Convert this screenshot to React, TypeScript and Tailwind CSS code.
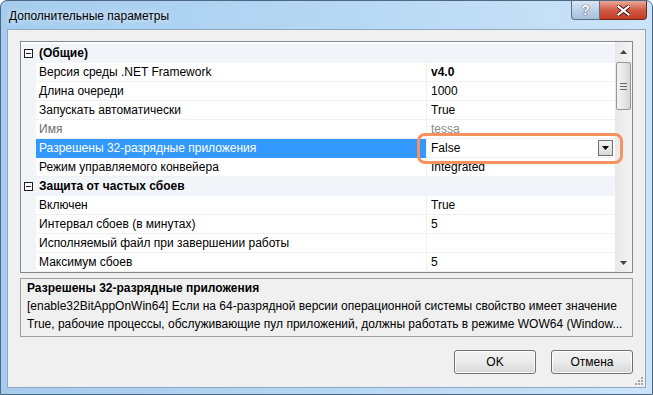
import React from 'react';

interface Row {
  name: string;
  value?: string;
  cat?: boolean;
  bold?: boolean;
  muted?: boolean;
  selected?: boolean;
}

const rows: Row[] = [
  { name: '(Общие)', cat: true },
  { name: 'Версия среды .NET Framework', value: 'v4.0', bold: true },
  { name: 'Длина очереди', value: '1000' },
  { name: 'Запускать автоматически', value: 'True' },
  { name: 'Имя', value: 'tessa', muted: true },
  { name: 'Разрешены 32-разрядные приложения', value: 'False', selected: true },
  { name: 'Режим управляемого конвейера', value: 'Integrated' },
  { name: 'Защита от частых сбоев', cat: true },
  { name: 'Включен', value: 'True' },
  { name: 'Интервал сбоев (в минутах)', value: '5' },
  { name: 'Исполняемый файл при завершении работы', value: '' },
  { name: 'Максимум сбоев', value: '5' },
];

const MinusBox = () => (
  <div className="w-[9px] h-[9px] border border-[#1e1e1e] bg-white flex items-center justify-center">
    <div className="w-[5px] h-px bg-[#1e1e1e]" />
  </div>
);

const GridRow = ({ row }: { row: Row }) => {
  if (row.cat) {
    return (
      <div className="flex h-[19px] shrink-0 bg-[#f1f4f8]">
        <div className="w-[15px] flex items-center justify-center">
          <MinusBox />
        </div>
        <div className="flex-1 pl-[3px] flex items-center font-bold border-b border-[#f1f4f8]">
          {row.name}
        </div>
      </div>
    );
  }
  return (
    <div className="flex h-[19px] shrink-0">
      <div className="w-[15px] bg-[#f1f4f8]" />
      <div
        className={`w-[390px] pl-[3px] flex items-center border-b ${
          row.selected ? 'bg-[#3399ff] text-white border-[#3399ff]' : 'border-[#f0f0f0]'
        } ${row.muted ? 'text-[#6d6d6d]' : ''}`}
      >
        {row.name}
      </div>
      <div
        className={`flex-1 pl-[4px] flex items-center border-l border-b border-[#f0f0f0] ${
          row.bold ? 'font-bold' : ''
        } ${row.muted ? 'text-[#8a8a8a]' : ''}`}
      >
        <span className="flex-1">{row.value}</span>
        {row.selected && (
          <div className="w-[15px] h-[16px] mr-[2px] border border-[#6f6f6f] bg-gradient-to-b from-[#f4f4f4] to-[#d9d9d9] flex items-center justify-center">
            <svg width="7" height="4" viewBox="0 0 7 4">
              <path d="M0 0h7L3.5 4z" fill="#000" />
            </svg>
          </div>
        )}
      </div>
    </div>
  );
};

const ScrollBar = () => (
  <div className="w-[17px] bg-gradient-to-r from-[#e8e8e8] to-[#f4f4f4] flex flex-col items-center">
    <div className="h-[20px] flex items-center justify-center">
      <svg width="7" height="4" viewBox="0 0 7 4">
        <path d="M3.5 0L7 4H0z" fill="#444" />
      </svg>
    </div>
    <div className="w-[15px] h-[48px] rounded-[2px] border border-[#979797] bg-gradient-to-r from-[#f3f3f3] via-[#e8e8e8] to-[#d6d6d6] flex flex-col items-center justify-center gap-[2px]">
      <div className="w-[7px] h-px bg-[#6a6a6a]" />
      <div className="w-[7px] h-px bg-[#6a6a6a]" />
      <div className="w-[7px] h-px bg-[#6a6a6a]" />
    </div>
    <div className="flex-1" />
    <div className="h-[19px] flex items-center justify-center">
      <svg width="7" height="4" viewBox="0 0 7 4">
        <path d="M0 0h7L3.5 4z" fill="#444" />
      </svg>
    </div>
  </div>
);

const Button = ({ label }: { label: string }) => (
  <button className="w-[82px] h-[24px] rounded-[3px] border border-[#707070] bg-gradient-to-b from-[#f2f2f2] via-[#ebebeb] to-[#d6d6d6] shadow-[inset_0_0_0_1px_#fcfcfc] text-[12px] text-black">
    {label}
  </button>
);

export default function App() {
  return (
    <div className="w-[653px] h-[395px] relative overflow-hidden rounded-t-[7px] border border-[#4d6784] bg-gradient-to-r from-[#a5ccee] via-[#b5d7f3] to-[#cce4f8] flex flex-col font-['Liberation_Sans',Arial,sans-serif] text-[12px] text-black">
      {/* title bar */}
      <div className="h-[28px] flex items-start justify-between pl-[8px] pr-[5px]">
        <div className="pt-[6px] text-[12px] text-black [text-shadow:0_0_6px_#ffffff]">
          Дополнительные параметры
        </div>
        <div className="flex">
          <div className="w-[29px] h-[19px] rounded-bl-[4px] border border-[#54708f] border-t-0 bg-gradient-to-b from-[#d9e7f5] via-[#bdd2e8] to-[#a6bfd9] flex items-center justify-center text-[14px] font-bold text-white [text-shadow:0_0_1px_#2b3e54,0_0_1px_#2b3e54]">
            ?
          </div>
          <div className="w-[47px] h-[19px] rounded-br-[4px] border border-[#6a2a22] border-t-0 border-l-0 bg-gradient-to-b from-[#e9a99a] via-[#d25b46] to-[#c23b26] flex items-center justify-center">
            <svg width="13" height="11" viewBox="0 0 13 11">
              <path
                d="M1.5 1.5l10 8M11.5 1.5l-10 8"
                stroke="#3b1510"
                strokeWidth="4"
                strokeLinecap="square"
              />
              <path
                d="M1.5 1.5l10 8M11.5 1.5l-10 8"
                stroke="#ffffff"
                strokeWidth="2.2"
                strokeLinecap="square"
              />
            </svg>
          </div>
        </div>
      </div>

      {/* client area */}
      <div className="flex-1 mx-[6px] mb-[6px] border border-[#8fa8c2] bg-[#f0f0f0] flex flex-col px-[12px] pt-[11px]">
        {/* property grid */}
        <div className="relative h-[232px] border border-[#828790] bg-white flex">
          <div className="flex-1 flex flex-col overflow-hidden pt-[2px]">
            {rows.map((r) => (
              <GridRow key={r.name} row={r} />
            ))}
          </div>
          <ScrollBar />

          {/* highlight */}
          <div className="absolute left-[396px] top-[91px] w-[206px] h-[31px] rounded-[8px] border-[3px] border-[#f7925e]" />
        </div>

        {/* description */}
        <div className="mt-[5px] h-[59px] border border-[#a0a0a0] px-[6px] leading-[18px]">
          <div className="font-bold">Разрешены 32-разрядные приложения</div>
          <div className="whitespace-nowrap">
            [enable32BitAppOnWin64] Если на 64-разрядной версии операционной системы свойство имеет значение
          </div>
          <div className="whitespace-nowrap">
            True, рабочие процессы, обслуживающие пул приложений, должны работать в режиме WOW64 (Window...
          </div>
        </div>

        {/* buttons */}
        <div className="flex-1 flex items-start justify-end gap-[15px] pt-[13px] relative">
          <Button label="OK" />
          <Button label="Отмена" />
          <svg className="absolute right-[-11px] bottom-[1px]" width="9" height="9" viewBox="0 0 9 9">
            <g fill="#a9a9a9">
              <rect x="6" y="0" width="2" height="2" />
              <rect x="3" y="3" width="2" height="2" />
              <rect x="6" y="3" width="2" height="2" />
              <rect x="0" y="6" width="2" height="2" />
              <rect x="3" y="6" width="2" height="2" />
              <rect x="6" y="6" width="2" height="2" />
            </g>
          </svg>
        </div>
      </div>
    </div>
  );
}
